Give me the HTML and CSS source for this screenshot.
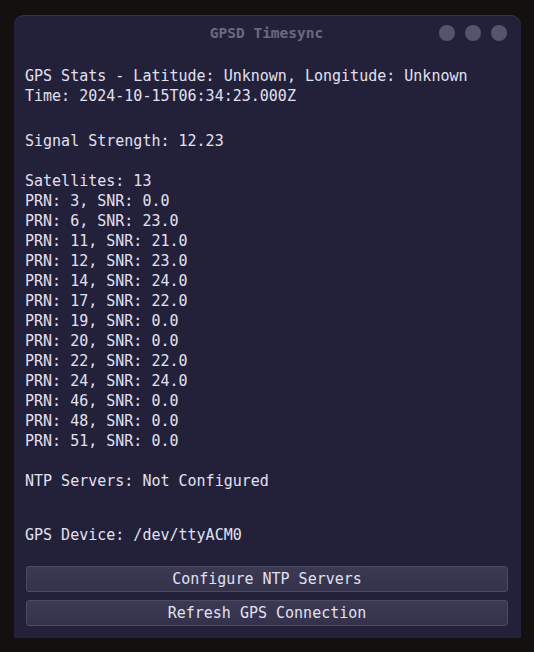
FILE: index.html
```html
<!DOCTYPE html>
<html>
<head>
<meta charset="utf-8">
<link rel="stylesheet" href="styles.css">
</head>
<body>
<div class="window">
  <div class="titlebar">
    <span class="title">GPSD Timesync</span>
    <div class="controls">
      <span class="dot"></span><span class="dot"></span><span class="dot"></span>
    </div>
  </div>
  <div class="content">
    <div class="block b-stats">GPS Stats - Latitude: Unknown, Longitude: Unknown<br>Time: 2024-10-15T06:34:23.000Z</div>
    <div class="block b-signal">Signal Strength: 12.23</div>
    <div class="block b-sats">Satellites: 13<br>PRN: 3, SNR: 0.0<br>PRN: 6, SNR: 23.0<br>PRN: 11, SNR: 21.0<br>PRN: 12, SNR: 23.0<br>PRN: 14, SNR: 24.0<br>PRN: 17, SNR: 22.0<br>PRN: 19, SNR: 0.0<br>PRN: 20, SNR: 0.0<br>PRN: 22, SNR: 22.0<br>PRN: 24, SNR: 24.0<br>PRN: 46, SNR: 0.0<br>PRN: 48, SNR: 0.0<br>PRN: 51, SNR: 0.0</div>
    <div class="block b-ntp">NTP Servers: Not Configured</div>
    <div class="block b-device">GPS Device: /dev/ttyACM0</div>
    <div class="buttons">
      <button class="btn">Configure NTP Servers</button>
      <button class="btn">Refresh GPS Connection</button>
    </div>
  </div>
</div>
</body>
</html>
```
FILE: styles.css
```css
html, body {
  margin: 0;
  padding: 0;
  background: #141010;
  width: 534px;
  height: 652px;
  overflow: hidden;
}
body {
  font-family: "DejaVu Sans Mono", "Liberation Mono", monospace;
}
.window {
  margin: 15px 0 0 14px;
  width: 507px;
  height: 623px;
  background: #23213a;
  border-radius: 10px 10px 0 0;
  box-shadow: inset 0 1px 0 #34314c;
  display: flex;
  flex-direction: column;
}
.titlebar {
  height: 36px;
  position: relative;
  display: flex;
  align-items: center;
  justify-content: center;
}
.title {
  font-size: 14.5px;
  font-weight: bold;
  color: #6b6884;
  margin-left: -2px;
}
.controls {
  position: absolute;
  right: 14px;
  top: 10px;
  display: flex;
  gap: 10px;
}
.dot {
  width: 16px;
  height: 16px;
  border-radius: 50%;
  background: #56536c;
}
.content {
  padding: 0 11px;
  display: flex;
  flex-direction: column;
  color: #e2e0f0;
  font-size: 15px;
  line-height: 20px;
}
.b-stats { margin-top: 14.5px; }
.b-signal { margin-top: 25px; }
.b-sats { margin-top: 20px; }
.b-ntp { margin-top: 20px; }
.b-device { margin-top: 34.5px; }
.buttons {
  margin-top: 21px;
  display: flex;
  flex-direction: column;
  gap: 8px;
  padding-left: 1px;
}
.btn {
  width: 482px;
  height: 26px;
  margin: 0;
  padding: 0;
  font-family: "DejaVu Sans Mono", "Liberation Mono", monospace;
  font-size: 15px;
  color: #e2e0f0;
  background: linear-gradient(#3b3953, #34324b);
  border: 1px solid #4d4a64;
  border-radius: 3px;
}
```
